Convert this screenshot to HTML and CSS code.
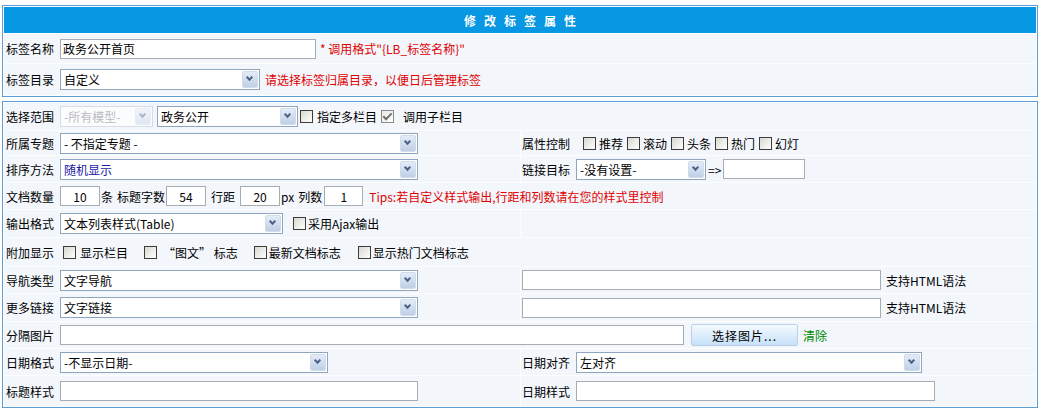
FILE: index.html
```html
<!DOCTYPE html>
<html>
<head>
    <meta charset="utf-8">
    <title>修改标签属性</title>
    <link rel="stylesheet" href="styles.css">
</head>
<body>
    <div class="page">
        <!-- 基本信息 -->
        <div class="box">
            <div class="title">修改标签属性</div>
            <div class="row h29">
                <div class="cell">
                    <span class="lbl">标签名称</span>
                    <input type="text" class="txt w256" value="政务公开首页">
                    <span class="red ml4">* 调用格式"{LB_标签名称}"</span>
                </div>
            </div>
            <div class="row h31">
                <div class="cell">
                    <span class="lbl">标签目录</span>
                    <span class="dd w200"><select><option>自定义</option></select><span class="arr"></span></span>
                    <span class="red ml5">请选择标签归属目录，以便日后管理标签</span>
                </div>
            </div>
        </div>

        <!-- 调用参数 -->
        <div class="box">
            <div class="row h27">
                <div class="cell">
                    <span class="lbl">选择范围</span>
                    <span class="dd w93 off"><select disabled><option>-所有模型-</option></select><span class="arr"></span></span>
                    <span class="dd w141 ml4"><select><option>政务公开</option></select><span class="arr"></span></span>
                    <input type="checkbox" class="chk ml2" id="multi">
                    <label for="multi" class="ml4">指定多栏目</label>
                    <input type="checkbox" class="chk ml4 soft" id="sub" checked>
                    <label for="sub" class="ml9">调用子栏目</label>
                </div>
            </div>
            <div class="row h24">
                <div class="cell left">
                    <span class="lbl">所属专题</span>
                    <span class="dd w358"><select><option>- 不指定专题 -</option></select><span class="arr"></span></span>
                </div>
                <div class="cell right">
                    <span class="lbl">属性控制</span>
                    <span class="flags">
                        <input type="checkbox" class="chk" id="f1"><label for="f1">推荐</label>
                        <input type="checkbox" class="chk" id="f2"><label for="f2">滚动</label>
                        <input type="checkbox" class="chk" id="f3"><label for="f3">头条</label>
                        <input type="checkbox" class="chk" id="f4"><label for="f4">热门</label>
                        <input type="checkbox" class="chk" id="f5"><label for="f5">幻灯</label>
                    </span>
                </div>
            </div>
            <div class="row h26">
                <div class="cell left">
                    <span class="lbl">排序方法</span>
                    <span class="dd w358 blue"><select><option>随机显示</option></select><span class="arr"></span></span>
                </div>
                <div class="cell right">
                    <span class="lbl">链接目标</span>
                    <span class="dd w130"><select><option>-没有设置-</option></select><span class="arr"></span></span>
                    <span class="ml2">=&gt;</span>
                    <input type="text" class="txt w82 ml2">
                </div>
            </div>
            <div class="row h26">
                <div class="cell">
                    <span class="lbl">文档数量</span>
                    <input type="text" class="txt num w40" value="10">
                    <span class="ml1">条</span>
                    <span class="ml4">标题字数</span>
                    <input type="text" class="txt num w40 ml1" value="54">
                    <span class="ml5">行距</span>
                    <input type="text" class="txt num w40 ml5" value="20">
                    <span class="ml1">px</span>
                    <span class="ml4">列数</span>
                    <input type="text" class="txt num w39 ml2" value="1">
                    <span class="red ml6">Tips:若自定义样式输出,行距和列数请在您的样式里控制</span>
                </div>
            </div>
            <div class="row h27">
                <div class="cell left">
                    <span class="lbl">输出格式</span>
                    <span class="dd w223"><select><option>文本列表样式(Table)</option></select><span class="arr"></span></span>
                    <input type="checkbox" class="chk ml10" id="ajax">
                    <label for="ajax" class="ml2">采用Ajax输出</label>
                </div>
                <div class="cell right"></div>
            </div>
            <div class="row h28">
                <div class="cell">
                    <span class="lbl">附加显示</span>
                    <input type="checkbox" class="chk ml3" id="s1"><label for="s1" class="ml4">显示栏目</label>
                    <input type="checkbox" class="chk ml16" id="s2"><label for="s2" class="ml6">“图文” 标志</label>
                    <input type="checkbox" class="chk ml16" id="s3"><label for="s3" class="ml2">最新文档标志</label>
                    <input type="checkbox" class="chk ml17" id="s4"><label for="s4" class="ml2">显示热门文档标志</label>
                </div>
            </div>
            <div class="row h26">
                <div class="cell left">
                    <span class="lbl">导航类型</span>
                    <span class="dd w358"><select><option>文字导航</option></select><span class="arr"></span></span>
                </div>
                <div class="cell right">
                    <input type="text" class="txt w359">
                    <span class="ml5">支持HTML语法</span>
                </div>
            </div>
            <div class="row h27">
                <div class="cell left">
                    <span class="lbl">更多链接</span>
                    <span class="dd w358"><select><option>文字链接</option></select><span class="arr"></span></span>
                </div>
                <div class="cell right">
                    <input type="text" class="txt w359">
                    <span class="ml5">支持HTML语法</span>
                </div>
            </div>
            <div class="row h26">
                <div class="cell">
                    <span class="lbl">分隔图片</span>
                    <input type="text" class="txt w624">
                    <button class="btn">选择图片...</button>
                    <span class="green">清除</span>
                </div>
            </div>
            <div class="row h26">
                <div class="cell left">
                    <span class="lbl">日期格式</span>
                    <span class="dd w268"><select><option>-不显示日期-</option></select><span class="arr"></span></span>
                </div>
                <div class="cell right">
                    <span class="lbl">日期对齐</span>
                    <span class="dd w346"><select><option>左对齐</option></select><span class="arr"></span></span>
                </div>
            </div>
            <div class="row h30">
                <div class="cell left">
                    <span class="lbl">标题样式</span>
                    <input type="text" class="txt w358">
                </div>
                <div class="cell right">
                    <span class="lbl">日期样式</span>
                    <input type="text" class="txt w359">
                </div>
            </div>
        </div>
    </div>
</body>
</html>
```

FILE: styles.css
```css
body {
    margin: 0;
    background: #ffffff;
    font-family: "Noto Sans CJK SC", "Liberation Sans", sans-serif;
    font-size: 12px;
    color: #000000;
}

.page {
    width: 1036px;
    margin: 5px 0 0 2px;
}

.box {
    display: flex;
    flex-direction: column;
    gap: 1px;
    padding: 1px;
    border: 1px solid #5b9ed6;
    background: #fbfdff;
}

.box + .box {
    margin-top: 4px;
}

.title {
    height: 26px;
    display: flex;
    align-items: center;
    justify-content: center;
    padding-left: 8px;
    background: #0897e2;
    color: #ffffff;
    font-weight: bold;
    letter-spacing: 8px;
}

.row {
    display: flex;
    gap: 1px;
}

.h24 { height: 24px; }
.h26 { height: 26px; }
.h27 { height: 27px; }
.h28 { height: 28px; }
.h29 { height: 29px; }
.h30 { height: 30px; }
.h31 { height: 31px; }

.cell {
    box-sizing: border-box;
    flex: 1;
    display: flex;
    align-items: center;
    padding-left: 2px;
    background: #f3f7fc;
    white-space: nowrap;
}

.cell.left {
    flex: 0 0 516px;
}

.cell.right {
    padding-left: 1px;
}

.lbl {
    flex: none;
    width: 54px;
}

/* text inputs */
.txt {
    box-sizing: border-box;
    height: 20px;
    margin: 0;
    padding: 0 2px;
    border: 1px solid #a5acb2;
    border-radius: 0;
    background: #ffffff;
    font: inherit;
    color: #000000;
    flex: none;
}

.txt.num {
    text-align: center;
}

/* select boxes */
.dd {
    position: relative;
    box-sizing: border-box;
    display: inline-block;
    height: 21px;
    flex: none;
}

.dd select {
    appearance: none;
    -webkit-appearance: none;
    box-sizing: border-box;
    width: 100%;
    height: 100%;
    margin: 0;
    padding: 0 0 0 3px;
    border: 1px solid #8fa6c0;
    border-radius: 0;
    background: #ffffff;
    font: inherit;
    color: #000000;
}

.dd .arr {
    position: absolute;
    top: 2px;
    right: 2px;
    bottom: 2px;
    width: 16px;
    box-sizing: border-box;
    border: 1px solid #d0dcec;
    border-radius: 2px;
    background: linear-gradient(#e4ecf8, #bfcfe6);
    pointer-events: none;
}

.dd .arr::after {
    content: "";
    position: absolute;
    left: 4px;
    top: 3px;
    width: 3px;
    height: 3px;
    border-right: 2px solid #4d6185;
    border-bottom: 2px solid #4d6185;
    transform: rotate(45deg);
}

.dd.off select {
    border-color: #c9d2dd;
    color: #a3a3a3;
}

.dd.off .arr {
    opacity: 0.45;
}

.dd.blue select {
    color: #1a1aa8;
}

/* checkboxes */
.chk {
    appearance: none;
    -webkit-appearance: none;
    position: relative;
    box-sizing: border-box;
    width: 13px;
    height: 13px;
    margin: 0;
    border: 1px solid #3c3c3c;
    background: linear-gradient(135deg, #d8d8d0, #ffffff);
    flex: none;
}

.chk.soft {
    border-color: #8a8a8a;
    background: linear-gradient(135deg, #e6e6e2, #ffffff);
}

.chk:checked::after {
    content: "";
    position: absolute;
    left: 3px;
    top: 0;
    width: 3px;
    height: 7px;
    border-right: 2px solid #707070;
    border-bottom: 2px solid #707070;
    transform: rotate(45deg);
}

.flags {
    display: flex;
    align-items: center;
    margin-left: 7px;
}

.flags .chk {
    margin-right: 3px;
}

.flags label {
    margin-right: 4px;
}

.btn {
    box-sizing: border-box;
    width: 107px;
    height: 22px;
    margin: 0 5px 0 7px;
    padding: 0;
    border: 1px solid #b9d0e6;
    border-radius: 2px;
    background: linear-gradient(#f5faff, #c6e1f8);
    font: inherit;
    color: #000000;
    letter-spacing: 1px;
}

.red { color: #e00000; }
.green { color: #008a00; }

.w39 { width: 39px; }
.w40 { width: 40px; }
.w82 { width: 82px; }
.w93 { width: 93px; }
.w130 { width: 130px; }
.w141 { width: 141px; }
.w200 { width: 200px; }
.w223 { width: 223px; }
.w256 { width: 256px; }
.w268 { width: 268px; }
.w346 { width: 346px; }
.w358 { width: 358px; }
.w359 { width: 359px; }
.w624 { width: 624px; }

.ml1 { margin-left: 1px; }
.ml2 { margin-left: 2px; }
.ml3 { margin-left: 3px; }
.ml4 { margin-left: 4px; }
.ml5 { margin-left: 5px; }
.ml6 { margin-left: 6px; }
.ml9 { margin-left: 9px; }
.ml10 { margin-left: 10px; }
.ml16 { margin-left: 16px; }
.ml17 { margin-left: 17px; }
```
